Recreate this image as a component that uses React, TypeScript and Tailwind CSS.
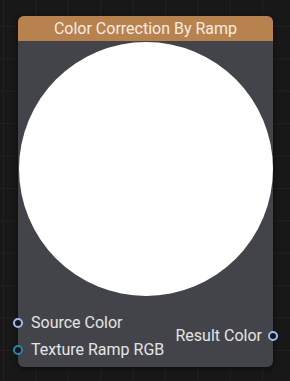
import React from "react";

type Port = { label: string; ring: string };

const inputs: Port[] = [
  { label: "Source Color", ring: "border-[#a3b8f5]" },
  { label: "Texture Ramp RGB", ring: "border-[#2a87a6]" },
];

/** A small socket dot sitting on the node edge. */
function Socket({ ring, side }: { ring: string; side: "left" | "right" }) {
  return (
    <span
      className={`absolute top-1/2 h-[10px] w-[10px] -translate-y-1/2 rounded-full border-2 bg-[#15171b] ${ring} ${
        side === "left" ? "left-[-5px]" : "right-[-5px]"
      }`}
    />
  );
}

export default function App() {
  return (
    <div
      className="h-[381px] w-[290px] overflow-hidden bg-[#181818] bg-[linear-gradient(to_right,#212121_1px,transparent_1px),linear-gradient(to_bottom,#212121_1px,transparent_1px)] bg-[size:32.4px_32.4px] bg-[position:3px_26px] pl-[18px] pt-[16px]"
      style={{ fontFamily: "Roboto, 'Liberation Sans', sans-serif" }}
    >
      <div className="relative flex w-[255px] flex-col rounded-[6px] bg-[#434449] shadow-[0_2px_6px_rgba(0,0,0,0.5)]">
        <div className="flex h-[25px] items-center justify-center rounded-t-[6px] bg-[#b8824e] text-[16px] text-[#f4ece4]">
          Color Correction By Ramp
        </div>
        <div className="mx-auto mt-[1px] h-[254px] w-[254px] rounded-full bg-white" />
        <div className="flex items-center justify-between pb-[4px] pt-[13px] text-[16px] text-[#e4e4e6]">
          <div className="flex flex-col">
            {inputs.map((p) => (
              <div key={p.label} className="relative flex h-[27px] items-center pl-[13px]">
                <Socket ring={p.ring} side="left" />
                {p.label}
              </div>
            ))}
          </div>
          <div className="relative flex h-[27px] items-center pr-[11px]">
            Result Color
            <Socket ring="border-[#a3b8f5]" side="right" />
          </div>
        </div>
      </div>
    </div>
  );
}
